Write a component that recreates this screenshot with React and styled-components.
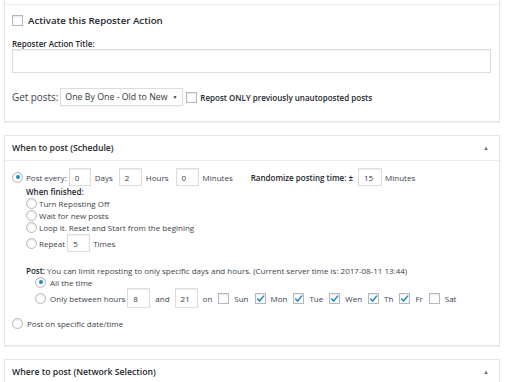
import React from "react";
import styled, { createGlobalStyle } from "styled-components";

const GlobalStyle = createGlobalStyle`
  body {
    margin: 0;
    background: #fff;
    font-family: "Open Sans", "Noto Sans", sans-serif;
    font-size: 8px;
    color: #3c434a;
  }
`;

const Page = styled.div`
  width: 496px;
  padding-left: 4px;
`;

const Panel = styled.div`
  border: 1px solid #e5e5e5;
  border-top: ${(p) => (p.$cut ? "none" : "1px solid #e5e5e5")};
  margin-top: ${(p) => p.$gap || 0}px;
  background: #fff;
  box-shadow: 0 1px 1px rgba(0, 0, 0, 0.04);
`;

const Stub = styled.div`
  height: 4px;
  border-bottom: 1px solid #eee;
`;

const Header = styled.div`
  height: 24px;
  display: flex;
  align-items: center;
  justify-content: space-between;
  padding: 0 10px 0 7px;
  border-bottom: ${(p) => (p.$open ? "1px solid #eee" : "none")};
  font-weight: 600;
  font-size: 8.7px;
  color: #23282d;
`;

const Arrow = styled.span`
  font-size: 6px;
  color: #72777c;
`;

const Body = styled.div`
  padding: ${(p) => p.$pad || "0 7px"};
  display: flex;
  flex-direction: column;
`;

const Row = styled.div`
  display: flex;
  align-items: center;
  height: ${(p) => p.$h || 12}px;
  margin-top: ${(p) => p.$mt || 0}px;
  padding-left: ${(p) => p.$indent || 0}px;
  white-space: nowrap;
`;

const Box = styled.span`
  box-sizing: border-box;
  width: 11px;
  height: 11px;
  border: 1px solid #b4b9be;
  background: #fff;
  box-shadow: inset 0 1px 2px rgba(0, 0, 0, 0.1);
  display: inline-flex;
  align-items: center;
  justify-content: center;
  flex: none;
  margin-right: ${(p) => p.$mr ?? 4}px;
`;

const Radio = styled(Box)`
  border-radius: 50%;
  &::after {
    content: "";
    display: ${(p) => (p.$on ? "block" : "none")};
    width: 4px;
    height: 4px;
    border-radius: 50%;
    background: #1e8cbe;
  }
`;

const Big = styled.span`
  font-size: 9.7px;
  font-weight: 600;
  color: #23282d;
`;

const Label = styled.span`
  font-size: ${(p) => p.$size || 8}px;
  font-weight: ${(p) => (p.$bold ? 600 : 400)};
  color: ${(p) => (p.$bold ? "#23282d" : "#3c434a")};
  margin-right: ${(p) => p.$mr || 0}px;
`;

const TextInput = styled.div`
  height: 24px;
  border: 1px solid #ddd;
  box-shadow: inset 0 1px 2px rgba(0, 0, 0, 0.07);
  box-sizing: border-box;
  width: 479px;
`;

const Num = styled.span`
  display: inline-flex;
  align-items: center;
  box-sizing: border-box;
  width: ${(p) => p.$w || 23}px;
  height: ${(p) => p.$h || 18}px;
  border: 1px solid #ddd;
  box-shadow: inset 0 1px 2px rgba(0, 0, 0, 0.07);
  padding-left: 5px;
  color: #32373c;
  margin: 0 ${(p) => p.$mr ?? 4}px 0 ${(p) => p.$ml ?? 2}px;
  flex: none;
`;

const Select = styled.span`
  display: inline-flex;
  align-items: center;
  justify-content: space-between;
  box-sizing: border-box;
  width: 123px;
  height: 18px;
  border: 1px solid #ddd;
  box-shadow: 0 1px 2px rgba(0, 0, 0, 0.05);
  padding: 0 5px 0 4px;
  color: #32373c;
  margin: 0 3px 0 2px;
  font-size: 8.8px;
`;

const Caret = styled.span`
  font-size: 5px;
  color: #32373c;
`;

const Check = () => (
  <svg width="9" height="9" viewBox="0 0 9 9">
    <path d="M1.3 4.6 L3.6 7 L8 1.6" fill="none" stroke="#1e8cbe" strokeWidth="1.5" />
  </svg>
);

const days = [
  ["Sun", false],
  ["Mon", true],
  ["Tue", true],
  ["Wen", true],
  ["Th", true],
  ["Fr", true],
  ["Sat", false],
];

const App = () => {
  return (
    <Page>
      <GlobalStyle />
      <Panel $cut>
        <Stub />
        <Body $pad="0 7px 15px">
          <Row $h={16} $mt={7}>
            <Box $mr={5} />
            <Big>Activate this Reposter Action</Big>
          </Row>
          <Row $mt={9}>
            <Label $bold>Reposter Action Title:</Label>
          </Row>
          <TextInput />
          <Row $h={18} $mt={15}>
            <Label $size={9.9}>Get posts:</Label>
            <Select>
              One By One - Old to New <Caret>▼</Caret>
            </Select>
            <Box $mr={3} />
            <Label $bold>Repost ONLY previously unautoposted posts</Label>
          </Row>
        </Body>
      </Panel>

      <Panel $gap={13}>
        <Header $open>
          When to post (Schedule)
          <Arrow>▲</Arrow>
        </Header>
        <Body $pad="0 7px 16px">
          <Row $h={18} $mt={7}>
            <Radio $on $mr={3} />
            <Label>Post every:</Label>
            <Num $w={22}>0</Num>
            <Label $mr={6}>Days</Label>
            <Num $ml={0}>2</Num>
            <Label $mr={7}>Hours</Label>
            <Num $ml={0}>0</Num>
            <Label $mr={18}>Minutes</Label>
            <Label $bold>Randomize posting time: ±</Label>
            <Num $w={24} $ml={5} $mr={3}>15</Num>
            <Label>Minutes</Label>
          </Row>
          <Row $indent={14} $h={11}>
            <Label $bold>When finished:</Label>
          </Row>
          <Row $indent={14}>
            <Radio $mr={2} />
            <Label>Turn Reposting Off</Label>
          </Row>
          <Row $indent={14}>
            <Radio $mr={2} />
            <Label>Wait for new posts</Label>
          </Row>
          <Row $indent={14}>
            <Radio $mr={2} />
            <Label>Loop it. Reset and Start from the begining</Label>
          </Row>
          <Row $indent={14} $h={18} $mt={1}>
            <Radio $mr={2} />
            <Label>Repeat</Label>
            <Num $ml={2} $mr={3}>5</Num>
            <Label>Times</Label>
          </Row>
          <Row $indent={14} $mt={12}>
            <Label $bold $mr={2}>Post:</Label>
            <Label>
              You can limit reposting to only specific days and hours. (Current server time is: 2017-08-11 13:44)
            </Label>
          </Row>
          <Row $indent={23}>
            <Radio $on />
            <Label>All the time</Label>
          </Row>
          <Row $indent={23} $h={20}>
            <Radio />
            <Label>Only between hours</Label>
            <Num $h={20} $ml={2} $mr={5}>8</Num>
            <Label $mr={5}>and</Label>
            <Num $h={20} $ml={0} $mr={5}>21</Num>
            <Label $mr={6}>on</Label>
            {days.map(([d, on]) => (
              <React.Fragment key={d}>
                <Box $mr={5}>{on && <Check />}</Box>
                <Label $mr={6}>{d}</Label>
              </React.Fragment>
            ))}
          </Row>
          <Row $mt={9}>
            <Radio />
            <Label>Post on specific date/time</Label>
          </Row>
        </Body>
      </Panel>

      <Panel $gap={13}>
        <Header>
          Where to post (Network Selection)
          <Arrow>▲</Arrow>
        </Header>
      </Panel>
    </Page>
  );
};

export default App;
